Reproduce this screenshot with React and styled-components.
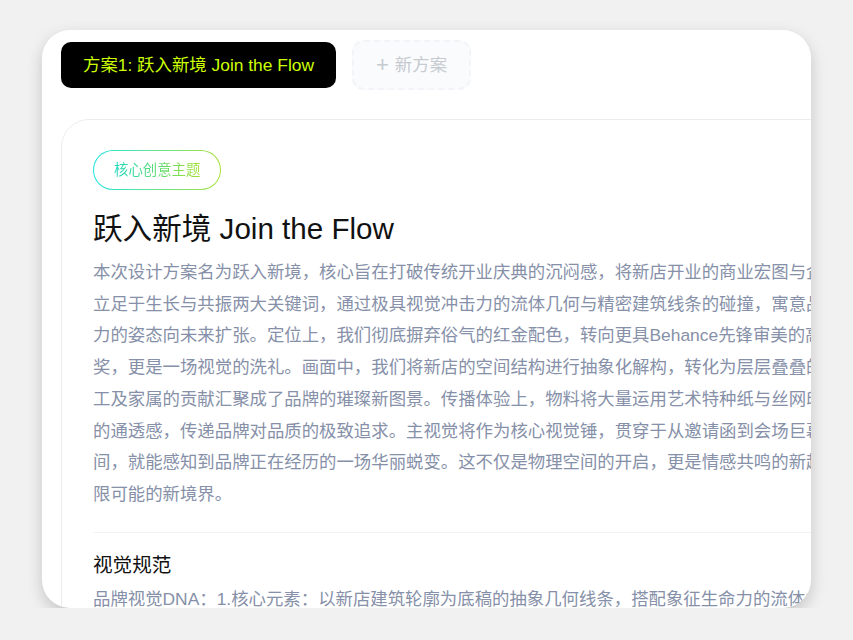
import React from 'react'
import styled, { createGlobalStyle } from 'styled-components'

const GlobalStyle = createGlobalStyle`
  html, body {
    margin: 0;
    background: #f1f1f1;
    font-family: "Liberation Sans", "Noto Sans CJK SC", sans-serif;
  }
`

const Page = styled.div`
  display: flex;
  justify-content: center;
  padding-top: 30px;
`

const Frame = styled.div`
  width: 769px;
  height: 578px;
  box-sizing: border-box;
  padding: 10px 19px 0;
  background: #fff;
  border-radius: 28px;
  overflow: hidden;
  box-shadow: 0 6px 16px rgba(0, 0, 0, 0.18);
`

const TabBar = styled.div`
  display: flex;
  align-items: center;
  gap: 16px;
  margin-bottom: 29px;
`

const Tab = styled.button`
  font: inherit;
  font-size: 17.4px;
  line-height: 22px;
  padding: 12px 22px;
  cursor: pointer;
  white-space: nowrap;
  background: ${p => (p.active ? '#000' : '#fafbfc')};
  color: ${p => (p.active ? '#ccff00' : '#c6cad1')};
  border: ${p => (p.active ? 'none' : '2px dashed #f2f4f7')};
  border-radius: ${p => (p.active ? '10px' : '12px')};
`

const Plus = styled.span`
  font-size: 22px;
  margin-right: 6px;
  vertical-align: -1px;
`

const Card = styled.div`
  width: 1100px;
  flex-shrink: 0;
  box-sizing: border-box;
  padding: 30px 31px;
  border: 1px solid #ececec;
  border-radius: 28px 28px 0 0;
`

const Pill = styled.div`
  width: fit-content;
  padding: 9px 20px;
  font-size: 14.4px;
  line-height: 20px;
  border: 1px solid transparent;
  border-radius: 999px;
  background:
    linear-gradient(#fff, #fff) padding-box,
    linear-gradient(90deg, #22e3e0, #a8e23a) border-box;
`

const PillText = styled.span`
  background: linear-gradient(90deg, #1fd8bd, #9fe030);
  -webkit-background-clip: text;
  background-clip: text;
  color: transparent;
`

const Title = styled.h1`
  margin: 20px 0 10px;
  font-size: 29.6px;
  line-height: 37px;
  font-weight: 400;
  color: #111;
`

const Body = styled.p`
  margin: 0;
  font-size: 17.4px;
  line-height: 31.7px;
  color: #8690a8;
  white-space: pre;
`

const Section = styled.div`
  margin-top: 21px;
  padding-top: 18px;
  border-top: 1px solid #f0f2f5;
`

const SectionTitle = styled.h2`
  margin: 0 0 5px;
  font-size: 19.6px;
  line-height: 28.8px;
  font-weight: 400;
  color: #111;
`

const intro = [
  '本次设计方案名为跃入新境，核心旨在打破传统开业庆典的沉闷感，将新店开业的商业宏图与企业的人文情怀深度融合。方案',
  '立足于生长与共振两大关键词，通过极具视觉冲击力的流体几何与精密建筑线条的碰撞，寓意品牌以不可阻挡的生命',
  '力的姿态向未来扩张。定位上，我们彻底摒弃俗气的红金配色，转向更具Behance先锋审美的高级荧光撞色，这不仅是对团队的褒',
  '奖，更是一场视觉的洗礼。画面中，我们将新店的空间结构进行抽象化解构，转化为层层叠叠的光影切面，象征着每一位员',
  '工及家属的贡献汇聚成了品牌的璀璨新图景。传播体验上，物料将大量运用艺术特种纸与丝网印刷工艺，呈现极具触感与层次',
  '的通透感，传递品牌对品质的极致追求。主视觉将作为核心视觉锤，贯穿于从邀请函到会场巨幕的每一处细节，让每一位来宾踏入空',
  '间，就能感知到品牌正在经历的一场华丽蜕变。这不仅是物理空间的开启，更是情感共鸣的新起点，开启无',
  '限可能的新境界。'
].join('\n')

const spec =
  '品牌视觉DNA：1.核心元素：以新店建筑轮廓为底稿的抽象几何线条，搭配象征生命力的流体曲线。'

export default function App() {
  return (
    <>
      <GlobalStyle />
      <Page>
        <Frame>
          <TabBar>
            <Tab active>方案1: 跃入新境 Join the Flow</Tab>
            <Tab>
              <Plus>+</Plus>新方案
            </Tab>
          </TabBar>
          <Card>
            <Pill>
              <PillText>核心创意主题</PillText>
            </Pill>
            <Title>跃入新境 Join the Flow</Title>
            <Body>{intro}</Body>
            <Section>
              <SectionTitle>视觉规范</SectionTitle>
              <Body>{spec}</Body>
            </Section>
          </Card>
        </Frame>
      </Page>
    </>
  )
}
